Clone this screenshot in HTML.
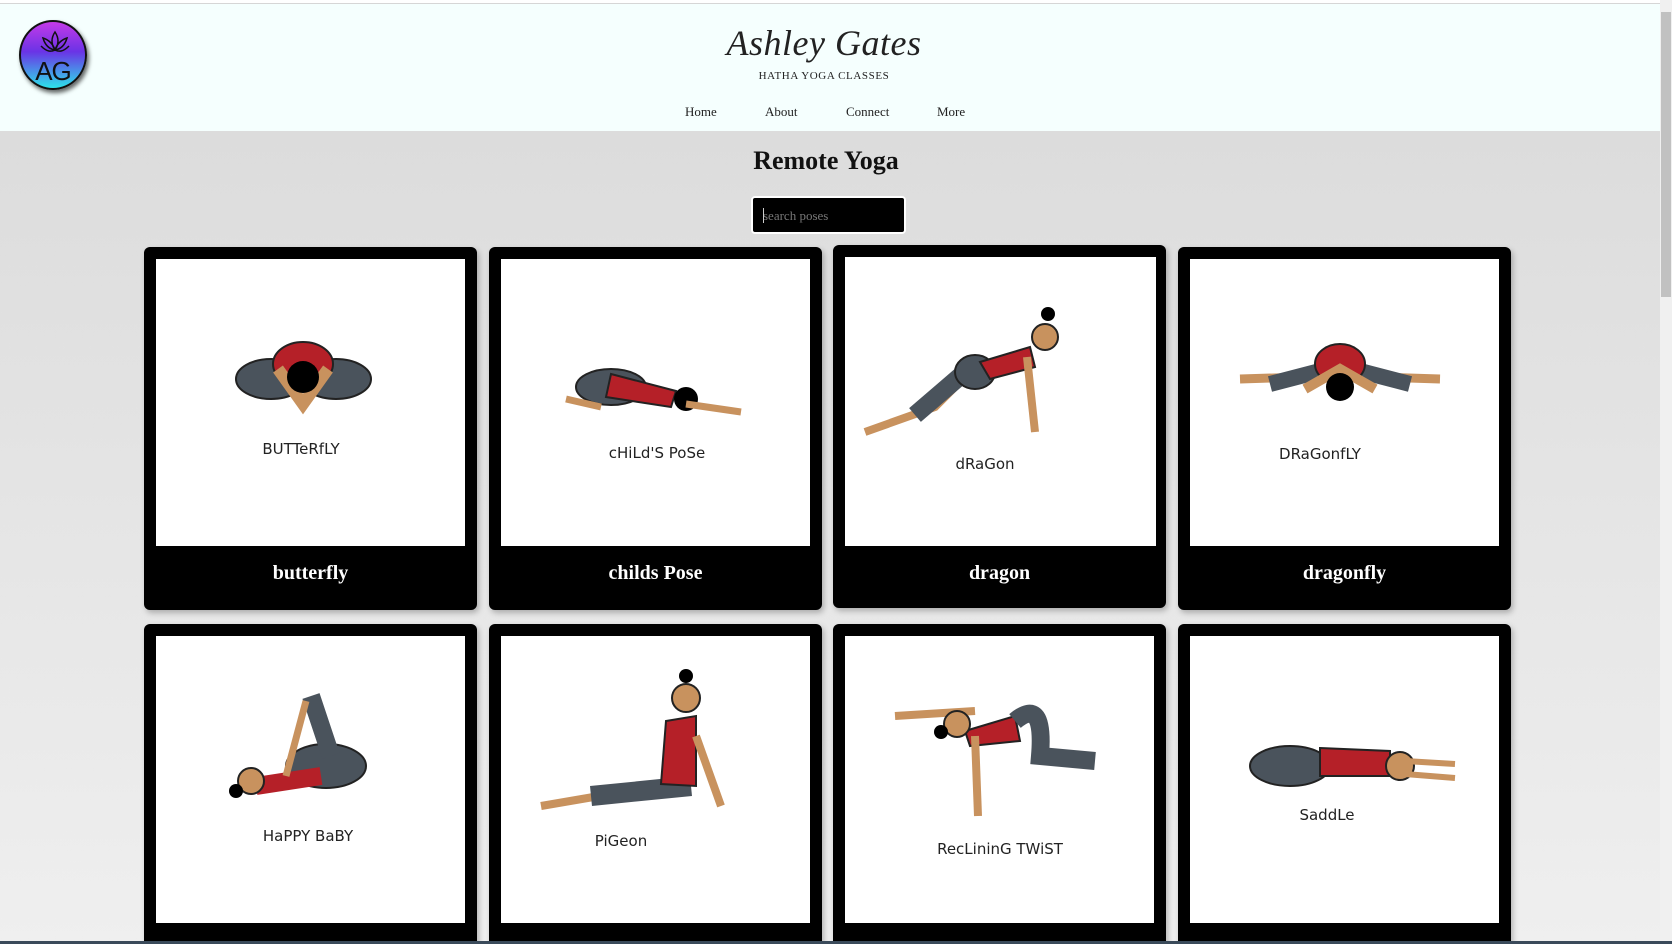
<!DOCTYPE html>
<html><head><meta charset="utf-8"><style>
*{margin:0;padding:0;box-sizing:border-box}
html,body{width:1672px;height:944px;overflow:hidden}
body{font-family:"Liberation Serif",serif;background:linear-gradient(#d9d9d9,#efefef);position:relative}
.top{position:absolute;left:0;top:0;width:1660px;height:4px;background:#fff;border-bottom:1px solid #d6d6d6}
header{position:absolute;left:0;top:4px;width:1660px;height:127px;background:#f5fffe}
.logo{position:absolute;left:19px;top:16px;width:68px;height:70px;border-radius:50%;background:linear-gradient(#c43ae8,#6a33e6 45%,#2de2ea);border:2px solid #111;box-shadow:2px 3px 4px rgba(0,0,0,.6)}
.logo span{position:absolute;left:0;right:0;top:34px;text-align:center;font-family:"Liberation Sans",sans-serif;font-size:26px;color:#111;letter-spacing:-1px}
.logo svg{position:absolute;left:18px;top:8px}
h1{position:absolute;left:0;width:1648px;top:18px;text-align:center;font-style:italic;font-weight:normal;font-size:36px;color:#222;letter-spacing:.5px}
.sub{position:absolute;left:0;width:1648px;top:66px;text-align:center;font-size:11px;letter-spacing:.6px;color:#222}
nav a{position:absolute;top:100px;font-size:13px;color:#222;text-decoration:none}
h2{position:absolute;left:0;width:1652px;top:146px;text-align:center;font-size:26px;font-weight:bold;color:#111}
.search{position:absolute;left:751px;top:196px;width:155px;height:38px;background:#000;border:2px solid #fff;border-radius:4px;color:#777;font-size:13px;padding:10px 10px}
.search:before{content:"";position:absolute;left:10px;top:10px;width:1px;height:15px;background:#ccc}
.card{position:absolute;width:333px;height:363px;background:#000;border-radius:6px;box-shadow:2px 3px 6px rgba(0,0,0,.25)}
.img{position:absolute;left:12px;top:12px;width:309px;height:287px;background:#fff}
.img svg{position:absolute;left:0;top:0}
.cap{position:absolute;left:0;right:0;top:315px;text-align:center;color:#fff;font-weight:bold;font-size:20px}
.lbl{font-family:"DejaVu Sans",sans-serif;font-size:15px;fill:#222}
.sb{position:absolute;left:1660px;top:0;width:12px;height:944px;background:#f0f0f0}
.sb i{position:absolute;left:1px;top:12px;width:10px;height:285px;background:#c1c1c1}
.bl{position:absolute;left:0;top:941px;width:1672px;height:3px;background:#3a4a5a}
</style></head><body>
<div class="top"></div>
<header>
<div class="logo"><svg width="32" height="28"><path d="M16 2 C12 8 12 14 16 20 C20 14 20 8 16 2Z M4 8 C6 15 10 19 16 20 C14 14 10 10 4 8Z M28 8 C26 15 22 19 16 20 C18 14 22 10 28 8Z M2 16 C8 22 12 22 16 20 M30 16 C24 22 20 22 16 20" stroke="#111" stroke-width="1.5" fill="none"/></svg><span>AG</span></div>
<h1>Ashley Gates</h1>
<div class="sub">HATHA YOGA CLASSES</div>
<nav><a style="left:685px">Home</a><a style="left:765px">About</a><a style="left:846px">Connect</a><a style="left:937px">More</a></nav>
</header>
<h2>Remote Yoga</h2>
<div class="search">search poses</div>

<div class="card" style="left:144px;top:247px"><div class="img"><svg width="309" height="287">
<ellipse cx="115" cy="120" rx="35" ry="20" fill="#4a535c" stroke="#222" stroke-width="2"/><ellipse cx="180" cy="120" rx="35" ry="20" fill="#4a535c" stroke="#222" stroke-width="2"/><ellipse cx="147" cy="105" rx="30" ry="22" fill="#b52028" stroke="#222" stroke-width="2"/><path d="M122 110 L147 145 L172 110" stroke="#c8925e" stroke-width="12" fill="none"/><circle cx="147" cy="118" r="16" fill="#000"/>
<text class="lbl" x="145" y="195" text-anchor="middle">BUTTeRfLY</text></svg></div><div class="cap">butterfly</div></div>

<div class="card" style="left:489px;top:247px"><div class="img"><svg width="309" height="287">
<ellipse cx="110" cy="128" rx="35" ry="18" fill="#4a535c" stroke="#222" stroke-width="2"/><path d="M110 115 L175 132 L170 148 L105 138Z" fill="#b52028" stroke="#222" stroke-width="2"/><circle cx="185" cy="140" r="12" fill="#000"/><path d="M185 145 L240 153" stroke="#c8925e" stroke-width="7"/><path d="M65 140 L100 148" stroke="#c8925e" stroke-width="7"/>
<text class="lbl" x="156" y="199" text-anchor="middle">cHiLd'S PoSe</text></svg></div><div class="cap">childs Pose</div></div>

<div class="card" style="left:833px;top:245px"><div class="img" style="width:311px;height:289px"><svg width="311" height="289">
<path d="M20 175 L90 150 L120 120" stroke="#c8925e" stroke-width="8" fill="none"/><path d="M70 158 L120 115" stroke="#4a535c" stroke-width="18"/><ellipse cx="130" cy="115" rx="20" ry="17" fill="#4a535c" stroke="#222" stroke-width="2"/><path d="M135 105 L185 90 L190 110 L145 122Z" fill="#b52028" stroke="#222" stroke-width="2"/><path d="M182 100 L190 175" stroke="#c8925e" stroke-width="8"/><circle cx="200" cy="80" r="13" fill="#c8925e" stroke="#222" stroke-width="2"/><circle cx="203" cy="57" r="7" fill="#000"/>
<text class="lbl" x="140" y="212" text-anchor="middle">dRaGon</text></svg></div><div class="cap" style="top:317px">dragon</div></div>

<div class="card" style="left:1178px;top:247px"><div class="img"><svg width="309" height="287">
<path d="M50 120 L115 118 M250 120 L185 118" stroke="#c8925e" stroke-width="9" fill="none"/><path d="M80 125 L130 112 M220 125 L170 112" stroke="#4a535c" stroke-width="16"/><ellipse cx="150" cy="105" rx="25" ry="20" fill="#b52028" stroke="#222" stroke-width="2"/><path d="M115 130 L150 110 L185 130" stroke="#c8925e" stroke-width="10" fill="none"/><circle cx="150" cy="128" r="14" fill="#000"/>
<text class="lbl" x="130" y="200" text-anchor="middle">DRaGonfLY</text></svg></div><div class="cap">dragonfly</div></div>

<div class="card" style="left:144px;top:624px"><div class="img"><svg width="309" height="287">
<ellipse cx="170" cy="130" rx="40" ry="22" fill="#4a535c" stroke="#222" stroke-width="2"/><path d="M155 60 L175 120" stroke="#4a535c" stroke-width="18"/><path d="M100 150 L165 140" stroke="#b52028" stroke-width="18"/><circle cx="95" cy="145" r="13" fill="#c8925e" stroke="#222" stroke-width="2"/><circle cx="80" cy="155" r="7" fill="#000"/><path d="M130 140 L150 65" stroke="#c8925e" stroke-width="7"/>
<text class="lbl" x="152" y="205" text-anchor="middle">HaPPY BaBY</text></svg></div><div class="cap">happy baby</div></div>

<div class="card" style="left:489px;top:624px"><div class="img"><svg width="309" height="287">
<path d="M40 170 L110 158" stroke="#c8925e" stroke-width="8"/><path d="M90 160 L190 150" stroke="#4a535c" stroke-width="20"/><path d="M165 85 L195 80 L195 150 L160 148Z" fill="#b52028" stroke="#222" stroke-width="2"/><path d="M195 100 L220 170" stroke="#c8925e" stroke-width="8"/><circle cx="185" cy="62" r="14" fill="#c8925e" stroke="#222" stroke-width="2"/><circle cx="185" cy="40" r="7" fill="#000"/>
<text class="lbl" x="120" y="210" text-anchor="middle">PiGeon</text></svg></div><div class="cap">pigeon</div></div>

<div class="card" style="left:833px;top:624px"><div class="img"><svg width="309" height="287">
<path d="M50 80 L130 75" stroke="#c8925e" stroke-width="8"/><path d="M120 95 L170 80 L175 105 L125 110Z" fill="#b52028" stroke="#222" stroke-width="2"/><path d="M170 85 Q200 60 195 120 L250 125" stroke="#4a535c" stroke-width="18" fill="none"/><path d="M130 100 L133 180" stroke="#c8925e" stroke-width="8"/><circle cx="112" cy="88" r="13" fill="#c8925e" stroke="#222" stroke-width="2"/><circle cx="96" cy="96" r="7" fill="#000"/>
<text class="lbl" x="155" y="218" text-anchor="middle">RecLininG TWiST</text></svg></div><div class="cap">reclining twist</div></div>

<div class="card" style="left:1178px;top:624px"><div class="img"><svg width="309" height="287">
<ellipse cx="100" cy="130" rx="40" ry="20" fill="#4a535c" stroke="#222" stroke-width="2"/><path d="M130 112 L200 115 L200 140 L130 140Z" fill="#b52028" stroke="#222" stroke-width="2"/><circle cx="210" cy="130" r="14" fill="#c8925e" stroke="#222" stroke-width="2"/><path d="M215 125 L265 128 M215 138 L265 142" stroke="#c8925e" stroke-width="6"/>
<text class="lbl" x="137" y="184" text-anchor="middle">SaddLe</text></svg></div><div class="cap">saddle</div></div>

<div class="sb"><i></i></div>
<div class="bl"></div>
</body></html>
